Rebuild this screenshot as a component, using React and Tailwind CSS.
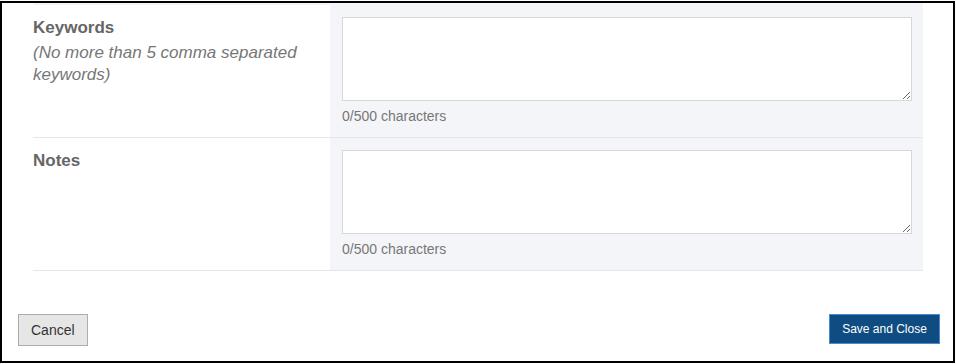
import React from "react";

const Row = ({ label, hint }) => (
  <div className="flex border-b border-[#e5e6e8]">
    <div className="w-[297px] pt-[12px] pr-4">
      <div className="text-[17px] leading-[22px] font-bold text-[#666]">{label}</div>
      {hint && (
        <div className="mt-[3px] text-[17px] leading-[22px] italic text-[#777]">{hint}</div>
      )}
    </div>
    <div className="flex-1 bg-[#f4f5f9] pl-[12px] pr-[11px] pt-[12px] pb-[12px]">
      <textarea className="block w-full h-[84px] bg-white border border-[#d6d7da] resize-y outline-none" />
      <div className="mt-[7px] text-[14px] leading-[17px] text-[#777]">0/500 characters</div>
    </div>
  </div>
);

const App = () => {
  return (
    <div
      className="w-[955px] h-[362px] mt-[1px] border-2 border-black bg-white flex flex-col"
      style={{ fontFamily: '"Liberation Sans", Arial, sans-serif' }}
    >
      <div className="ml-[31px] mr-[30px]">
        <div className="h-[2px] bg-[#f4f5f8]" />
        <Row label="Keywords" hint="(No more than 5 comma separated keywords)" />
        <Row label="Notes" />
      </div>
      <div className="flex justify-between items-start mt-[43px] pl-[16px] pr-[13px]">
        <button className="h-[32px] px-[12px] bg-[#e6e6e6] border border-[#adadad] text-[14px] text-[#333]">
          Cancel
        </button>
        <button className="h-[30px] w-[111px] bg-[#0f4c81] border border-[#4a8ad0] text-[12px] text-white">
          Save and Close
        </button>
      </div>
    </div>
  );
};

export default App;
